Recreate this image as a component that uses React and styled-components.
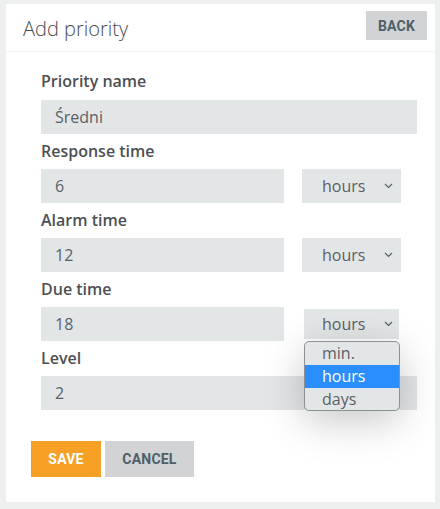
import React from 'react';
import styled, { createGlobalStyle } from 'styled-components';

const GlobalStyle = createGlobalStyle`
  body {
    margin: 0;
    background: #eef0ef;
    font-family: "Open Sans", "Liberation Sans", sans-serif;
  }
`;

const Page = styled.div`
  padding: 4px 5px 7px 6px;
`;

const Card = styled.div`
  background: #fff;
  width: 429px;
  height: 498px;
  display: flex;
  flex-direction: column;
`;

const Header = styled.div`
  height: 47px;
  border-bottom: 1px solid #f1f2f2;
  display: flex;
  align-items: flex-start;
  justify-content: space-between;
  padding: 0 8px 0 17px;
`;

const Title = styled.h1`
  margin: 12px 0 0;
  font-size: 20px;
  font-weight: 300;
  color: #4a4d50;
  line-height: 26px;
`;

const Button = styled.button`
  border: none;
  border-radius: 0;
  font-family: Roboto, "Liberation Sans", sans-serif;
  font-weight: 700;
  font-size: 14px;
  letter-spacing: 0.2px;
  text-transform: uppercase;
  cursor: pointer;
  height: ${p => p.$small ? '29px' : '36px'};
  width: ${p => p.$width}px;
  padding: 0;
  background: ${p => p.$primary ? '#f6a025' : '#d1d3d4'};
  color: ${p => p.$primary ? '#fff' : '#4f5f6a'};
`;

const BackButton = styled(Button)`
  margin-top: 7px;
`;

const Form = styled.form`
  padding: 19px 18px 0 35px;
  display: flex;
  flex-direction: column;
  flex: 1;
`;

const Label = styled.label`
  font-size: 16px;
  font-weight: 600;
  color: #4d5053;
  line-height: 20px;
  margin: ${p => p.$first ? '0 0 9px' : '7px 0 8px'};
`;

const Input = styled.input`
  box-sizing: border-box;
  height: 34px;
  width: ${p => p.$narrow ? '243px' : '100%'};
  border: none;
  background: #e3e6e6;
  padding: 0 14px;
  font-family: inherit;
  font-size: 16px;
  color: #5a6066;
  outline: none;
`;

const Row = styled.div`
  display: flex;
  align-items: center;
  gap: 18px;
  position: relative;
`;

const SelectBox = styled.div`
  box-sizing: border-box;
  width: ${p => p.$open ? '95px' : '99px'};
  height: ${p => p.$open ? '30px' : '34px'};
  margin-left: ${p => p.$open ? '2px' : '0'};
  background: #e3e6e6;
  display: flex;
  align-items: center;
  justify-content: space-between;
  padding: 0 ${p => p.$open ? '6px' : '8px'} 0 ${p => p.$open ? '18px' : '20px'};
  font-size: 16px;
  color: #5a6066;
`;

const Dropdown = styled.ul`
  position: absolute;
  top: 34px;
  left: 263px;
  width: 96px;
  box-sizing: border-box;
  margin: 0;
  padding: 0;
  list-style: none;
  background: #e3e6e6;
  border: 1px solid #8d9094;
  border-radius: 5px;
  overflow: hidden;
  box-shadow: 0 10px 40px rgba(0, 0, 0, 0.22);
  z-index: 2;
`;

const Option = styled.li`
  height: ${p => p.$last ? '22px' : '23px'};
  line-height: 22px;
  padding-left: 17px;
  font-size: 16px;
  color: ${p => p.$active ? '#fff' : '#5a6066'};
  background: ${p => p.$active ? '#2a8ffd' : 'transparent'};
`;

const Actions = styled.div`
  display: flex;
  gap: 4px;
  margin: 31px 0 0 -10px;
`;

const Chevron = () => (
  <svg width="9" height="6" viewBox="0 0 9 6">
    <path d="M1 1l3.5 3.5L8 1" fill="none" stroke="#5a6066" strokeWidth="1.2" />
  </svg>
);

const Select = ({ value, open }) => (
  <SelectBox $open={open}>
    <span>{value}</span>
    <Chevron />
  </SelectBox>
);

const timeFields = [
  { label: 'Response time', value: '6' },
  { label: 'Alarm time', value: '12' },
  { label: 'Due time', value: '18', open: true },
];

export default function App() {
  return (
    <Page>
      <GlobalStyle />
      <Card>
        <Header>
          <Title>Add priority</Title>
          <BackButton $small $width={61} type="button">Back</BackButton>
        </Header>
        <Form onSubmit={e => e.preventDefault()}>
          <Label $first>Priority name</Label>
          <Input defaultValue="Średni" />
          {timeFields.map(f => (
            <React.Fragment key={f.label}>
              <Label>{f.label}</Label>
              <Row>
                <Input $narrow defaultValue={f.value} />
                <Select value="hours" open={f.open} />
                {f.open && (
                  <Dropdown>
                    <Option>min.</Option>
                    <Option $active>hours</Option>
                    <Option $last>days</Option>
                  </Dropdown>
                )}
              </Row>
            </React.Fragment>
          ))}
          <Label>Level</Label>
          <Input defaultValue="2" />
          <Actions>
            <Button $primary $width={70} type="submit">Save</Button>
            <Button $width={89} type="button">Cancel</Button>
          </Actions>
        </Form>
      </Card>
    </Page>
  );
}
